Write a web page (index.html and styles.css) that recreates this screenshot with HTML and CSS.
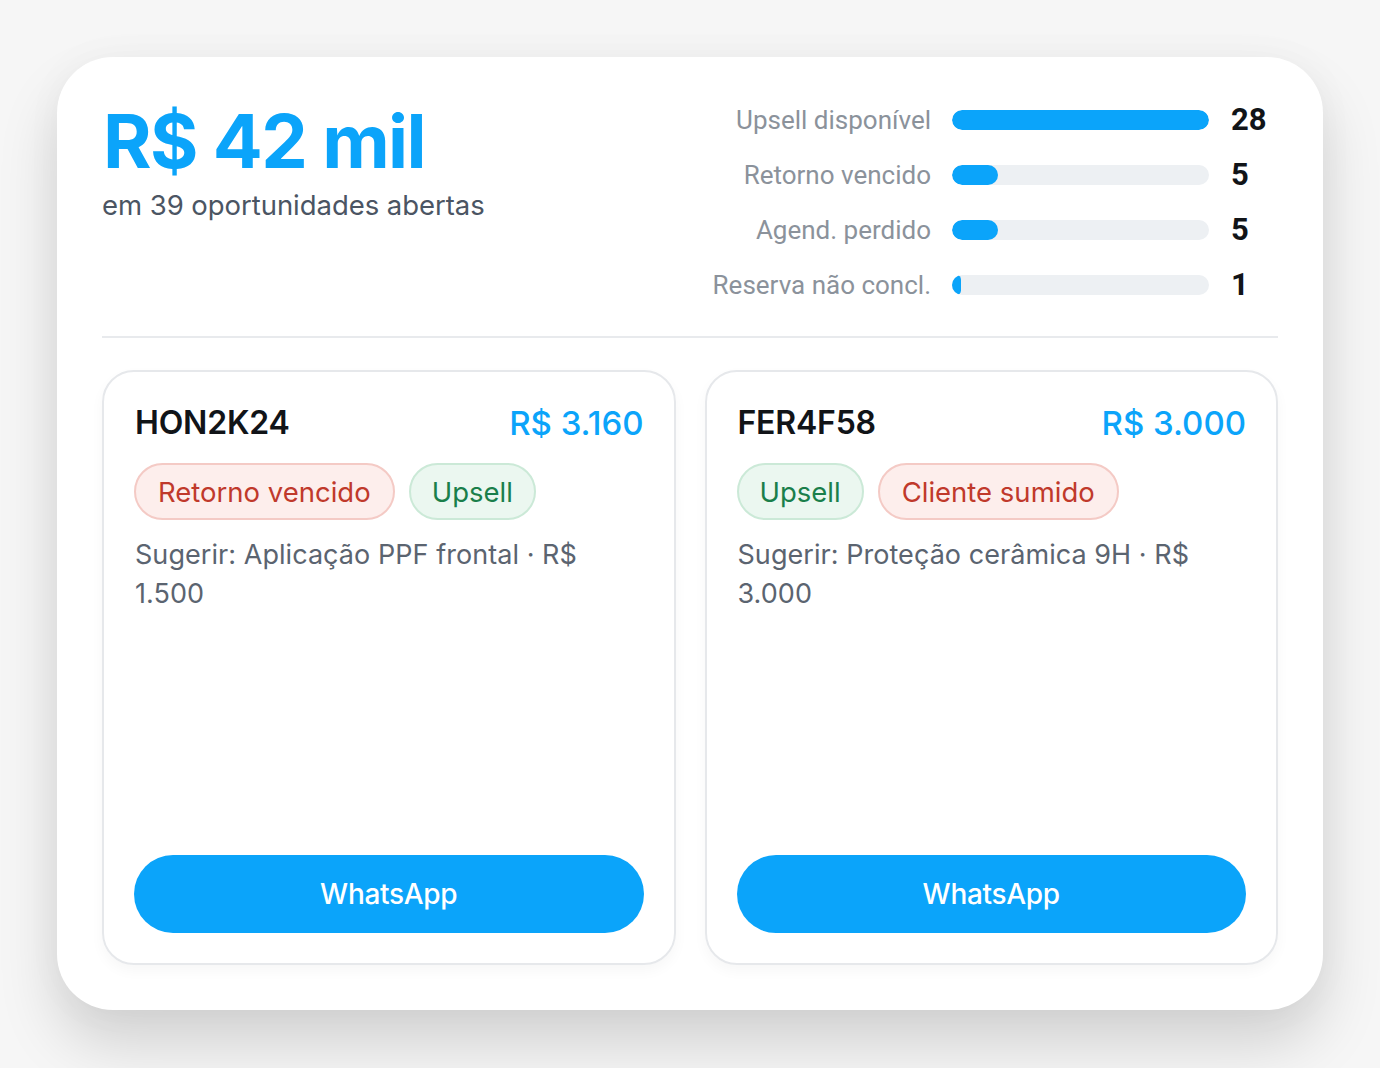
FILE: index.html
```html
<!DOCTYPE html>
<html lang="pt-BR">
<head>
<meta charset="utf-8">
<title>Oportunidades</title>
<link rel="stylesheet" href="styles.css">
</head>
<body>
<main class="panel">
  <header class="summary">
    <div class="total">
      <div class="total-value">R$ 42 mil</div>
      <div class="total-sub">em 39 oportunidades abertas</div>
    </div>
    <div class="stats">
      <div class="stat-label">Upsell disponível</div>
      <div class="track"><div class="fill" style="width:100%"></div></div>
      <div class="stat-num">28</div>
      <div class="stat-label">Retorno vencido</div>
      <div class="track"><div class="fill" style="width:17.9%"></div></div>
      <div class="stat-num">5</div>
      <div class="stat-label">Agend. perdido</div>
      <div class="track"><div class="fill" style="width:17.9%"></div></div>
      <div class="stat-num">5</div>
      <div class="stat-label">Reserva não concl.</div>
      <div class="track"><div class="fill" style="width:3.6%"></div></div>
      <div class="stat-num">1</div>
    </div>
  </header>
  <hr class="divider">
  <section class="cards">
    <article class="card">
      <div class="card-head">
        <span class="plate">HON2K24</span>
        <span class="price">R$ 3.160</span>
      </div>
      <div class="tags">
        <span class="tag tag-red">Retorno vencido</span>
        <span class="tag tag-green">Upsell</span>
      </div>
      <p class="suggest">Sugerir: Aplicação PPF frontal · R$ 1.500</p>
      <button class="wa">WhatsApp</button>
    </article>
    <article class="card">
      <div class="card-head">
        <span class="plate">FER4F58</span>
        <span class="price">R$ 3.000</span>
      </div>
      <div class="tags">
        <span class="tag tag-green">Upsell</span>
        <span class="tag tag-red">Cliente sumido</span>
      </div>
      <p class="suggest">Sugerir: Proteção cerâmica 9H · R$ 3.000</p>
      <button class="wa">WhatsApp</button>
    </article>
  </section>
</main>
</body>
</html>
```

FILE: styles.css
```css
* { box-sizing: border-box; }

html, body {
  margin: 0;
  height: 100%;
}

body {
  background: #f6f6f6;
  font-family: Inter, "Noto Sans", sans-serif;
  padding: 57px;
  overflow: hidden;
}

.panel {
  width: 1266px;
  height: 953px;
  background: #ffffff;
  border-radius: 56px;
  box-shadow: 0 34px 60px rgba(0, 0, 0, 0.15), 0 0 40px rgba(0, 0, 0, 0.03);
  padding: 38px 45px 45px;
  display: flex;
  flex-direction: column;
}

.summary {
  display: flex;
  justify-content: space-between;
  align-items: flex-start;
}

.total-value {
  font-size: 74px;
  font-weight: 700;
  line-height: 1;
  color: #0ba4fa;
  letter-spacing: -1.6px;
  margin-top: 9px;
  margin-left: 1px;
}

.total-sub {
  font-size: 27.5px;
  color: #4b5563;
  margin-top: 10px;
  letter-spacing: -0.05px;
}

.stats {
  display: grid;
  grid-template-columns: auto 257px 48px;
  grid-auto-rows: 55px;
  column-gap: 21px;
  align-items: center;
  margin-top: -3px;
}

.stat-label {
  font-family: Roboto, "Liberation Sans", sans-serif;
  font-size: 26px;
  color: #8b929b;
  text-align: right;
}

.track {
  height: 20px;
  border-radius: 10px;
  background: #edf0f3;
  overflow: hidden;
}

.fill {
  height: 100%;
  background: #0ba4fa;
  border-radius: 10px;
}

.stat-num {
  font-family: Roboto, "Liberation Sans", sans-serif;
  font-size: 31px;
  font-weight: 700;
  color: #111418;
  padding-left: 1px;
}

.divider {
  border: 0;
  height: 2px;
  background: #e8eaed;
  margin: 24px 0 32px;
}

.cards {
  flex: 1;
  display: grid;
  grid-template-columns: 1fr 1fr;
  gap: 29px;
}

.card {
  border: 2px solid #e6e8eb;
  border-radius: 32px;
  padding: 31px 30px 30px;
  display: flex;
  flex-direction: column;
  box-shadow: 0 6px 14px rgba(0, 0, 0, 0.035);
}

.card-head {
  display: flex;
  justify-content: space-between;
  align-items: center;
  line-height: 40px;
  padding-left: 1px;
}

.plate {
  font-size: 32px;
  font-weight: 600;
  color: #111418;
  letter-spacing: -0.2px;
}

.price {
  font-size: 33px;
  font-weight: 500;
  color: #0ba4fa;
  letter-spacing: 0;
}

.tags {
  display: flex;
  gap: 14px;
  margin-top: 20px;
}

.tag {
  height: 57px;
  border-radius: 29px;
  border: 2px solid;
  padding: 0 21px;
  display: inline-flex;
  align-items: center;
  font-size: 27.5px;
  letter-spacing: 0;
}

.tag-red {
  background: #fdeeec;
  border-color: #f4cac5;
  color: #c0392b;
  padding: 0 22px;
}

.tag-green {
  background: #ebf7f0;
  border-color: #cbe9d7;
  color: #1a7f4b;
}

.suggest {
  margin: 15px 0 0;
  font-size: 27px;
  line-height: 39px;
  color: #5b6470;
  letter-spacing: 0.05px;
  padding-left: 1px;
}

.wa {
  margin-top: auto;
  height: 78px;
  border: 0;
  border-radius: 39px;
  background: #0ba4fa;
  color: #ffffff;
  font-family: Inter, "Noto Sans", sans-serif;
  font-size: 28px;
  font-weight: 500;
  letter-spacing: -0.3px;
}
```
